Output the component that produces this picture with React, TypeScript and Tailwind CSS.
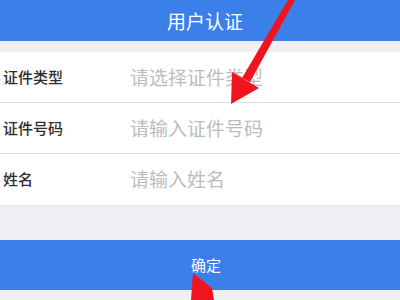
import React from 'react';

const font = { fontFamily: '"Noto Sans CJK SC", "Noto Sans", sans-serif' };

const rows = [
  { label: '证件类型', placeholder: '请选择证件类型' },
  { label: '证件号码', placeholder: '请输入证件号码' },
  { label: '姓名', placeholder: '请输入姓名' },
];

export default function App() {
  return (
    <main className="relative w-[400px] h-[300px] overflow-hidden bg-[#efeff4]" style={font}>
      {/* Header */}
      <header className="h-[41px] bg-[#3a80e8] flex items-center justify-center pl-[10px]">
        <h1 className="text-[19px] text-white leading-none">用户认证</h1>
      </header>

      <div className="h-[11px]" />

      {/* Form rows */}
      <div className="bg-white">
        {rows.map((row, i) => (
          <div
            key={row.label}
            className={`h-[51px] flex items-center ${i < rows.length - 1 ? 'border-b border-[#e2e2e6]' : ''}`}
          >
            <span className="w-[130px] pl-[3px] text-[15px] font-medium text-[#2e2e2e]">{row.label}</span>
            <span className="text-[19px] text-[#bcbcbc]">{row.placeholder}</span>
          </div>
        ))}
      </div>

      <div className="h-[35px] border-t border-[#e2e2e6]" />

      {/* Confirm button */}
      <button className="w-full h-[50px] bg-[#3a80e8] flex items-center justify-center pl-[12px]">
        <span className="text-[15px] text-white">确定</span>
      </button>

      {/* Red annotation arrows */}
      <svg className="absolute inset-0 pointer-events-none" width="400" height="300" viewBox="0 0 400 300">
        <polygon points="288,0 295,0 250,82 242,78" fill="#f0141e" />
        <polygon points="231,104 232,72 259,88" fill="#f0141e" />
        <polygon points="193,273 212,288 214,300 191,300" fill="#f0141e" />
      </svg>
    </main>
  );
}
